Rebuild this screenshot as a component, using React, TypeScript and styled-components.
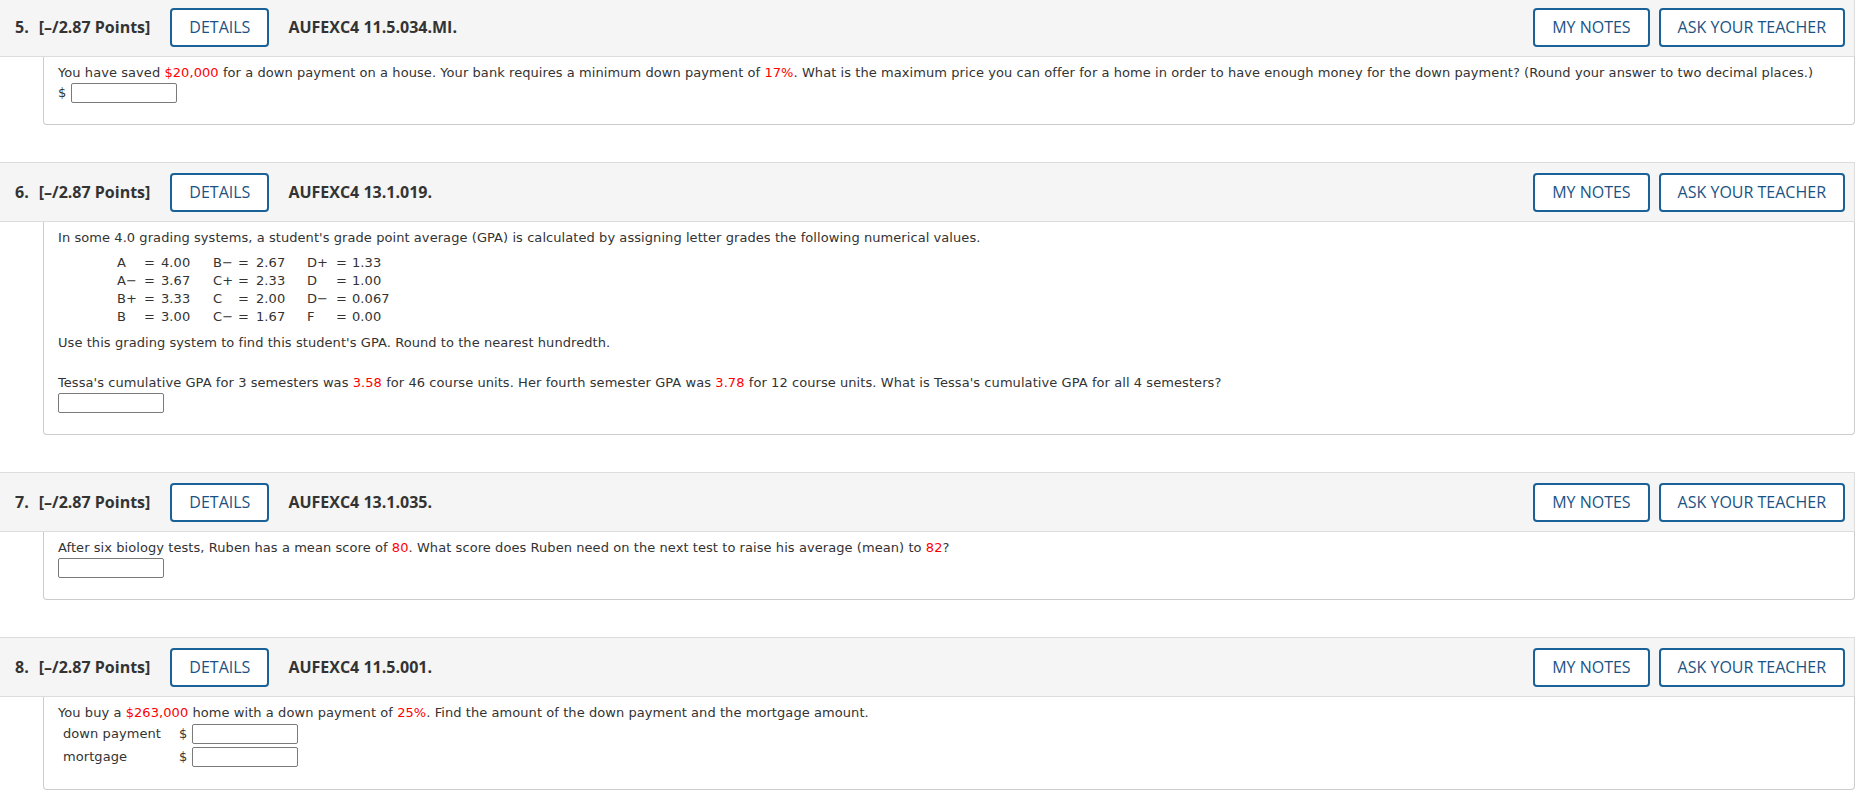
import React from "react";
import styled, { createGlobalStyle } from "styled-components";

const GlobalStyle = createGlobalStyle`
  html, body {
    margin: 0;
    padding: 0;
    background: #ffffff;
  }
  body {
    font-family: "DejaVu Sans", Verdana, sans-serif;
    overflow: hidden;
  }
`;

const Page = styled.main`
  display: flex;
  flex-direction: column;
  gap: 37px;
  margin-top: -3px;
  padding-right: 6px;
`;

const Question = styled.section`
  display: flex;
  flex-direction: column;
`;

const Header = styled.div`
  display: flex;
  align-items: center;
  height: 60px;
  box-sizing: border-box;
  background: #f5f5f5;
  border: 1px solid #dddddd;
  border-left: none;
  padding: 0 9px 0 15px;
  font-family: "Open Sans", "Liberation Sans", sans-serif;
  font-weight: 700;
  font-size: 16px;
  color: #333333;
`;

const Num = styled.span`
  margin-right: 10px;
`;

const Points = styled.span`
  margin-right: 20px;
`;

const Code = styled.span`
  margin-left: 19px;
  flex: 1;
`;

const Actions = styled.div`
  display: flex;
  gap: 9px;
`;

const HeadButton = styled.button`
  height: 39px;
  box-sizing: border-box;
  padding: 0 17px;
  background: #ffffff;
  border: 2px solid #1a6198;
  border-radius: 4px;
  font-family: "Open Sans", "Liberation Sans", sans-serif;
  font-size: 16px;
  font-weight: 400;
  color: #1b5283;
  cursor: pointer;
`;

const Body = styled.div`
  margin-left: 43px;
  border: 1px solid #cccccc;
  border-top: none;
  border-radius: 0 0 4px 4px;
  padding: 8px 14px 21px 14px;
  font-family: "DejaVu Sans", Verdana, sans-serif;
  font-size: 13px;
  line-height: 16px;
  letter-spacing: 0.07px;
  color: #333333;
`;

const Line = styled.p<{ $gap?: number }>`
  margin: ${(p) => p.$gap ?? 0}px 0 0 0;
`;

const Red = styled.span`
  color: #ff0000;
`;

const AnswerRow = styled.div`
  display: flex;
  align-items: center;
  gap: 5px;
  margin-top: 2px;
`;

const Input = styled.input`
  width: 106px;
  height: 20px;
  box-sizing: border-box;
  border: 1px solid #7a7a7a;
  border-radius: 2px;
  margin: 0;
  padding: 0 3px;
  background: #fff;
`;

const GradeGrid = styled.div`
  display: grid;
  grid-template-columns: 27px 17px 52px 25px 18px 51px 29px 16px auto;
  grid-auto-rows: 18px;
  align-items: center;
  margin: 8px 0 0 59px;
  width: max-content;
`;

const FieldTable = styled.div`
  display: grid;
  grid-template-columns: 111px auto auto;
  grid-auto-rows: 23px;
  align-items: center;
  column-gap: 5px;
  margin: 1px 0 0 5px;
  width: max-content;
`;

type Q = {
  num: number;
  code: string;
  children: React.ReactNode;
};

function QuestionBlock({ num, code, children }: Q) {
  return (
    <Question>
      <Header>
        <Num>{num}.</Num>
        <Points>[–/2.87 Points]</Points>
        <HeadButton>DETAILS</HeadButton>
        <Code>{code}</Code>
        <Actions>
          <HeadButton>MY NOTES</HeadButton>
          <HeadButton>ASK YOUR TEACHER</HeadButton>
        </Actions>
      </Header>
      <Body>{children}</Body>
    </Question>
  );
}

const grades: string[][] = [
  ["A", "=", "4.00", "B\u2212", "=", "2.67", "D+", "=", "1.33"],
  ["A\u2212", "=", "3.67", "C+", "=", "2.33", "D", "=", "1.00"],
  ["B+", "=", "3.33", "C", "=", "2.00", "D\u2212", "=", "0.067"],
  ["B", "=", "3.00", "C\u2212", "=", "1.67", "F", "=", "0.00"],
];

export default function App() {
  return (
    <>
      <GlobalStyle />
      <Page>
        <QuestionBlock num={5} code="AUFEXC4 11.5.034.MI.">
          <Line>
            You have saved <Red>$20,000</Red> for a down payment on a house. Your bank requires a
            minimum down payment of <Red>17%</Red>. What is the maximum price you can offer for a
            home in order to have enough money for the down payment? (Round your answer to two
            decimal places.)
          </Line>
          <AnswerRow>
            <span>$</span>
            <Input />
          </AnswerRow>
        </QuestionBlock>

        <QuestionBlock num={6} code="AUFEXC4 13.1.019.">
          <Line>
            In some 4.0 grading systems, a student's grade point average (GPA) is calculated by
            assigning letter grades the following numerical values.
          </Line>
          <GradeGrid>
            {grades.flatMap((row, r) =>
              row.map((cell, c) => <span key={`${r}-${c}`}>{cell}</span>)
            )}
          </GradeGrid>
          <Line $gap={9}>
            Use this grading system to find this student's GPA. Round to the nearest hundredth.
          </Line>
          <Line $gap={24}>
            Tessa's cumulative GPA for 3 semesters was <Red>3.58</Red> for 46 course units. Her
            fourth semester GPA was <Red>3.78</Red> for 12 course units. What is Tessa's cumulative
            GPA for all 4 semesters?
          </Line>
          <AnswerRow>
            <Input />
          </AnswerRow>
        </QuestionBlock>

        <QuestionBlock num={7} code="AUFEXC4 13.1.035.">
          <Line>
            After six biology tests, Ruben has a mean score of <Red>80</Red>. What score does Ruben
            need on the next test to raise his average (mean) to <Red>82</Red>?
          </Line>
          <AnswerRow>
            <Input />
          </AnswerRow>
        </QuestionBlock>

        <QuestionBlock num={8} code="AUFEXC4 11.5.001.">
          <Line>
            You buy a <Red>$263,000</Red> home with a down payment of <Red>25%</Red>. Find the amount
            of the down payment and the mortgage amount.
          </Line>
          <FieldTable>
            <span>down payment</span>
            <span>$</span>
            <Input />
            <span>mortgage</span>
            <span>$</span>
            <Input />
          </FieldTable>
        </QuestionBlock>
      </Page>
    </>
  );
}
